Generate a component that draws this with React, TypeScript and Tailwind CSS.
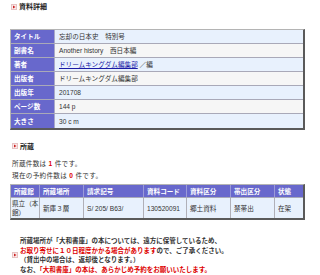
import React from "react";

const Bullet: React.FC = () => (
  <svg width="6" height="6" viewBox="0 0 6 6" className="shrink-0">
    <rect x="0.5" y="0.5" width="5" height="5" fill="#fbe9e9" stroke="#e6c3c3" />
    <polygon points="2,1.5 4.5,3 2,4.5" fill="#cc2222" />
  </svg>
);

const details: { label: string; value: React.ReactNode }[] = [
  { label: "タイトル", value: "忘却の日本史　特別号" },
  { label: "副書名", value: "Another history　西日本編" },
  {
    label: "著者",
    value: (
      <>
        <span className="text-[#1a1aa6] underline">ドリームキングダム編集部</span>
        <span>&nbsp;／編</span>
      </>
    ),
  },
  { label: "出版者", value: "ドリームキングダム編集部" },
  { label: "出版年", value: "201708" },
  { label: "ページ数", value: "144 p" },
  { label: "大きさ", value: "30 c m" },
];

const cols = [
  { h: "所蔵館", w: "w-[29px]" },
  { h: "所蔵場所", w: "w-[44px]" },
  { h: "請求記号", w: "w-[60px]" },
  { h: "資料コード", w: "w-[43px]" },
  { h: "資料区分", w: "w-[44px]" },
  { h: "帯出区分", w: "w-[44px]" },
  { h: "状態", w: "w-[29px]" },
];

const cells: React.ReactNode[] = [
  <>
    県立（本
    <br />
    館）
  </>,
  "新庫３層",
  "S/ 205/ B63/",
  "130520091",
  "郷土資料",
  "禁帯出",
  "在架",
];

export default function App() {
  return (
    <div
      className="w-[320px] h-[275px] bg-white text-[#333] text-[6.6px] leading-[9px] overflow-hidden"
      style={{ fontFamily: '"Liberation Sans", "Noto Sans CJK JP", sans-serif' }}
    >
      <div className="flex items-center gap-[2px] pl-[11px] pt-[3px] h-[10px]">
        <Bullet />
        <span className="font-bold text-[#222] text-[7px]">資料詳細</span>
      </div>

      <div className="ml-[10px] mt-[19px] w-[295px] border-t border-l border-[#b4b4b4] border-r-2 border-b-2 border-r-[#5a5a5a] border-b-[#5a5a5a]">
        {details.map((d, i) => (
          <div
            key={d.label}
            className={`flex h-[14px] ${i < details.length - 1 ? "border-b border-[#a9a9b8]" : "h-[13px]"}`}
          >
            <div className="w-[44px] shrink-0 bg-[#6868cc] text-white font-bold pl-[3px] flex items-center border-r border-[#a9a9c8]">
              {d.label}
            </div>
            <div
              className={`flex-1 pl-[4px] flex items-center ${i % 2 === 0 ? "bg-[#e8f1fd]" : "bg-[#f6f6f6]"}`}
            >
              {d.value}
            </div>
          </div>
        ))}
      </div>

      <div className="flex items-center gap-[2px] pl-[12px] mt-[11px] h-[10px]">
        <Bullet />
        <span className="font-bold text-[#222] text-[7px]">所蔵</span>
      </div>

      <div className="pl-[12px] mt-[7px] leading-[12px] tracking-[0.3px]">
        <div>
          所蔵件数は <span className="text-[#dd0000] font-bold">1</span> 件です。
        </div>
        <div>
          現在の予約件数は <span className="text-[#dd0000] font-bold">0</span> 件です。
        </div>
      </div>

      <div className="ml-[10px] mt-[2px] w-[295px] border-t border-l border-[#b4b4b4] border-r-2 border-b-2 border-r-[#5a5a5a] border-b-[#5a5a5a]">
        <div className="flex h-[13px] bg-[#6868cc] text-white font-bold border-b border-[#a9a9b8]">
          {cols.map((c, i) => (
            <div
              key={c.h}
              className={`${c.w} ${i === cols.length - 1 ? "flex-1" : "shrink-0 border-r border-[#9a9ad8]"} pl-[3px] flex items-center whitespace-nowrap overflow-hidden`}
            >
              {c.h}
            </div>
          ))}
        </div>
        <div className="flex h-[20px] bg-[#e8f1fd]">
          {cells.map((v, i) => (
            <div
              key={i}
              className={`${cols[i].w} ${i === cols.length - 1 ? "flex-1" : "shrink-0 border-r border-[#b0b0b8]"} ${i === 0 ? "pl-[1px]" : "pl-[3px]"} flex items-center whitespace-nowrap overflow-hidden`}
            >
              <div>{v}</div>
            </div>
          ))}
        </div>
      </div>

      <div className="flex items-center mt-[16px] pl-[12px] gap-[2px] font-bold text-[6.5px] leading-[9.7px]">
        <Bullet />
        <div>
          <div>所蔵場所が「大和書庫」の本については、遠方に保管しているため、</div>
          <div>
            <span className="text-[#dd0000]">お取り寄せに１０日程度かかる場合があります</span>ので、ご了承ください。
          </div>
          <div>（貸出中の場合は、返却後となります。）</div>
          <div>
            なお、<span className="text-[#dd0000]">「大和書庫」の本は、あらかじめ予約をお願いいたします。</span>
          </div>
        </div>
      </div>
    </div>
  );
}
